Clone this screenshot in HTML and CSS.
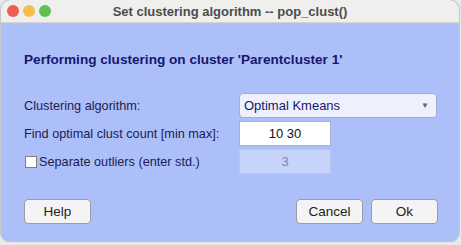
FILE: index.html
```html
<!DOCTYPE html>
<html lang="en">
<head>
    <meta charset="UTF-8">
    <title>Set clustering algorithm -- pop_clust()</title>
    <link rel="stylesheet" href="styles.css">
</head>
<body>
    <div class="window">
        <div class="titlebar">
            <div class="lights">
                <span class="light red"></span>
                <span class="light yellow"></span>
                <span class="light green"></span>
            </div>
            <div class="title">Set clustering algorithm -- pop_clust()</div>
        </div>

        <div class="body">
            <h1 class="heading">Performing clustering on cluster 'Parentcluster 1'</h1>

            <div class="form">
                <div class="row">
                    <label class="label">Clustering algorithm:</label>
                    <div class="select">
                        <span>Optimal Kmeans</span>
                        <span class="arrow">&#9660;</span>
                    </div>
                </div>
                <div class="row">
                    <label class="label">Find optimal clust count [min max]:</label>
                    <div class="field">10 30</div>
                </div>
                <div class="row">
                    <label class="label check"><span class="box"></span>Separate outliers (enter std.)</label>
                    <div class="field disabled">3</div>
                </div>
            </div>

            <div class="buttons">
                <button class="btn">Help</button>
                <div class="right">
                    <button class="btn">Cancel</button>
                    <button class="btn">Ok</button>
                </div>
            </div>
        </div>
    </div>
</body>
</html>
```

FILE: styles.css
```css
body {
    margin: 0;
    background: #e9e9e9;
    font-family: 'Liberation Sans', Arial, sans-serif;
}

.window {
    width: 458px;
    height: 242px;
    margin-left: 1px;
    border-radius: 10px;
    overflow: hidden;
    background: #adbff8;
    display: flex;
    flex-direction: column;
    box-shadow: 0 0 0 1px #c8c8c8;
}

/* --- title bar --- */

.titlebar {
    height: 22px;
    background: #efefed;
    border-bottom: 1px solid #d4d4d4;
    display: flex;
    align-items: center;
    position: relative;
}

.lights {
    display: flex;
    gap: 4px;
    padding-left: 6px;
}

.light {
    width: 12px;
    height: 12px;
    border-radius: 50%;
}

.red { background: #ec5f57; }
.yellow { background: #f5bf4f; }
.green { background: #5ec14f; }

.title {
    position: absolute;
    left: 0;
    right: 0;
    text-align: center;
    font-size: 13px;
    font-weight: bold;
    color: #4c4c4c;
}

/* --- content --- */

.body {
    flex: 1;
    padding: 0 21px 0 23px;
    display: flex;
    flex-direction: column;
}

.heading {
    margin: 29px 0 0 0;
    font-size: 13.6px;
    font-weight: bold;
    color: #15166e;
    line-height: 15px;
}

.form {
    margin-top: 26px;
    display: flex;
    flex-direction: column;
    gap: 3px;
}

.row {
    display: flex;
    align-items: center;
    justify-content: space-between;
    height: 25px;
}

.label {
    font-size: 12.7px;
    color: #1c1c52;
}

.check {
    display: flex;
    align-items: center;
    gap: 2px;
    padding-left: 1px;
}

.box {
    width: 10px;
    height: 10px;
    background: #fff;
    border: 1px solid #7d7d7d;
}

.select {
    width: 198px;
    height: 25px;
    margin-right: 1px;
    box-sizing: border-box;
    border: 1px solid #a4acc6;
    border-radius: 4px;
    background: #eef1fd;
    display: flex;
    align-items: center;
    justify-content: space-between;
    padding: 0 7px 0 4px;
    font-size: 13px;
    color: #15166e;
}

.arrow {
    font-size: 8px;
    color: #666;
}

.field {
    width: 92px;
    height: 25px;
    margin-right: 107px;
    box-sizing: border-box;
    background: #fff;
    border: 1px solid #aab0c8;
    display: flex;
    align-items: center;
    justify-content: center;
    font-size: 13px;
    color: #111;
}

.field.disabled {
    background: #c6d4fb;
    border-color: #b8c6ef;
    color: #7f86a8;
}

/* --- buttons --- */

.buttons {
    margin-top: auto;
    margin-bottom: 18px;
    display: flex;
    justify-content: space-between;
}

.right {
    display: flex;
    gap: 8px;
}

.btn {
    width: 67px;
    height: 25px;
    background: #f4f4f4;
    border: 1px solid #9c9c9c;
    border-radius: 4px;
    font-family: 'Liberation Sans', Arial, sans-serif;
    font-size: 13.5px;
    color: #222;
    padding: 0;
}
```
